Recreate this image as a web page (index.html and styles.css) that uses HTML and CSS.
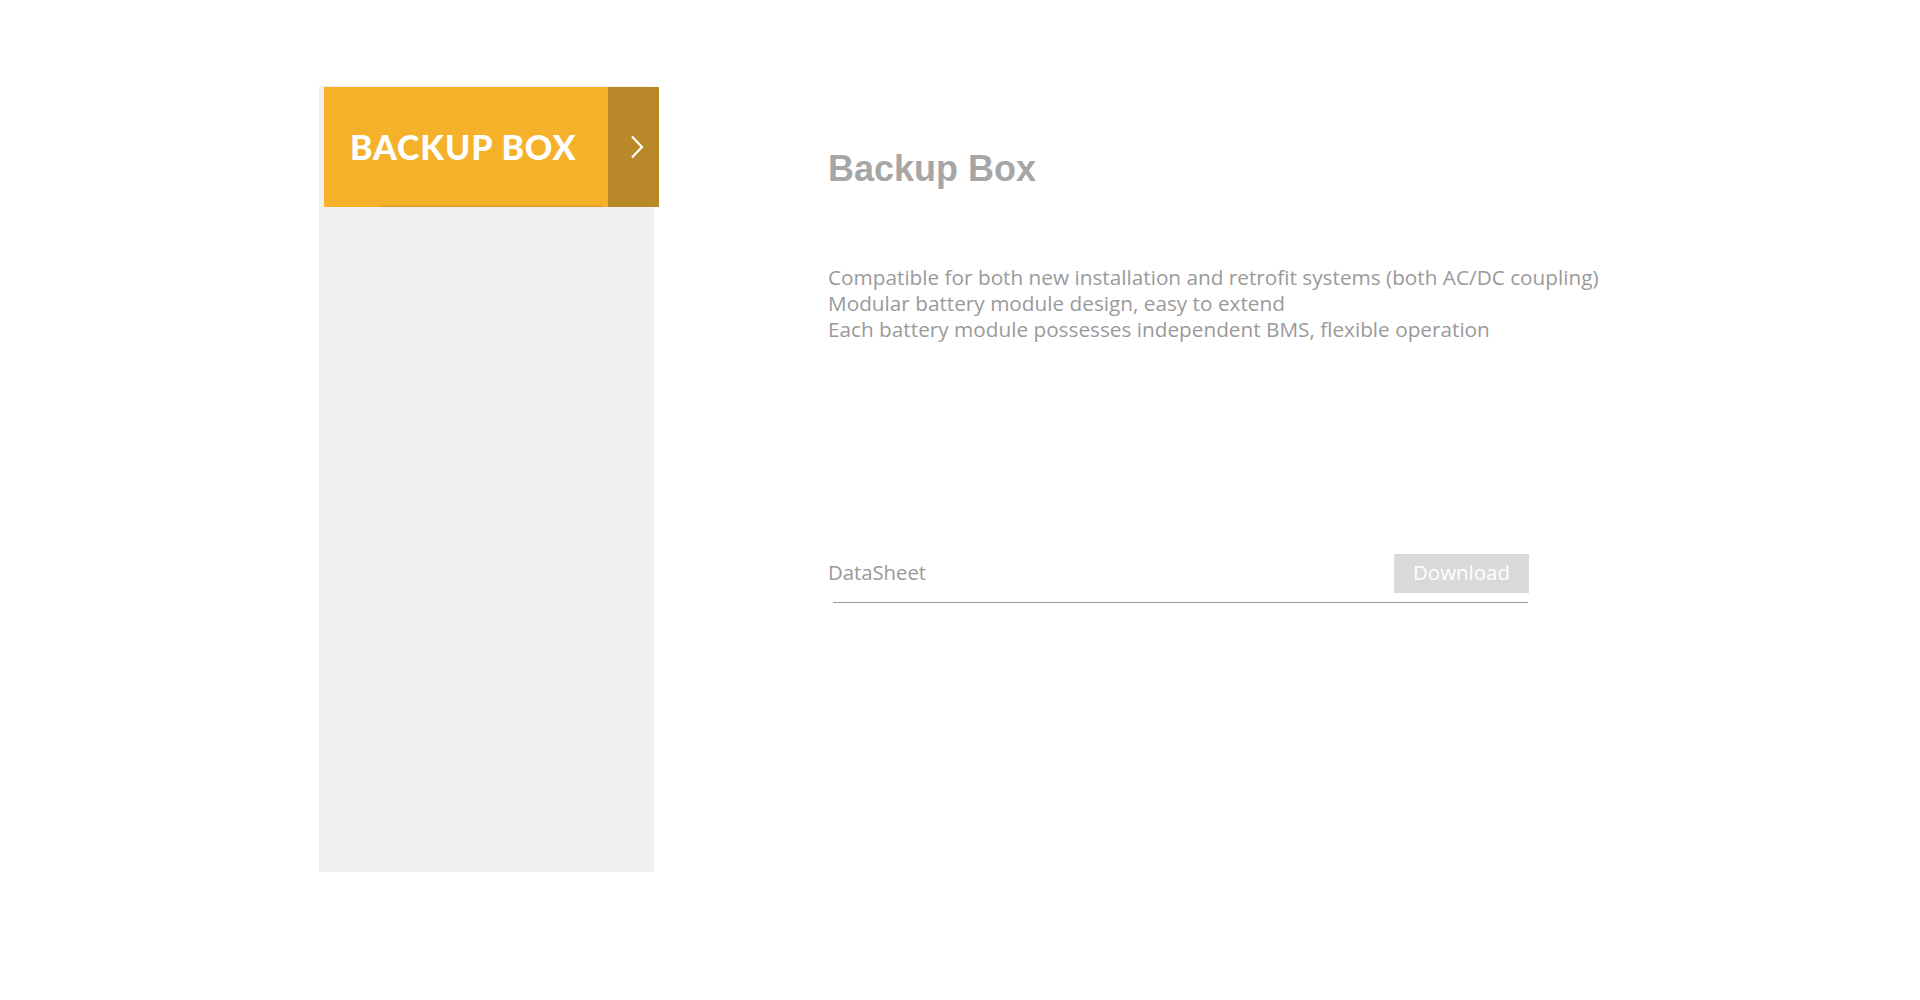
FILE: index.html
```html
<!DOCTYPE html>
<html lang="en">
<head>
<meta charset="utf-8">
<title>Backup Box</title>
<link rel="stylesheet" href="styles.css">
</head>
<body>
<div class="page">
  <aside class="side">
    <div class="tab">
      <span class="tab-label">BACKUP BOX</span>
      <span class="tab-arrow">
        <svg width="14" height="24" viewBox="0 0 14 24"><path d="M2 1.5 L12 12 L2 22.5" fill="none" stroke="#fff" stroke-width="2.2"/></svg>
      </span>
    </div>
  </aside>
  <main class="detail">
    <h1 class="title">Backup Box</h1>
    <ul class="features">
      <li>Compatible for both new installation and retrofit systems (both AC/DC coupling)</li>
      <li>Modular battery module design, easy to extend</li>
      <li>Each battery module possesses independent BMS, flexible operation</li>
    </ul>
    <div class="datasheet">
      <span class="datasheet-label">DataSheet</span>
      <a class="download" href="#">Download</a>
    </div>
    <div class="datasheet-rule"></div>
  </main>
</div>
</body>
</html>
```
FILE: styles.css
```css
html, body {
  margin: 0;
  padding: 0;
  background: #fff;
}
.page {
  display: flex;
  align-items: flex-start;
  padding: 86px 0 0 319px;
}
.side {
  width: 335px;
  height: 786px;
  background: #f0f0f0;
  padding-top: 1px;
  box-sizing: border-box;
  flex-shrink: 0;
}
.tab {
  display: flex;
  width: 335px;
  height: 120px;
  margin-left: 5px;
  position: relative;
}
.tab::after {
  content: "";
  position: absolute;
  left: 56px;
  width: 222px;
  bottom: 1px;
  height: 1px;
  background: #e3a52d;
  box-shadow: 0 1px 1px rgba(0,0,0,0.12);
}
.tab-label {
  width: 284px;
  background: #f6b12a;
  color: #fff;
  display: flex;
  align-items: center;
  padding-left: 26px;
  padding-bottom: 2px;
  box-sizing: border-box;
  font-family: "Lato", "DejaVu Sans", sans-serif;
  font-weight: 900;
  font-size: 34px;
  letter-spacing: 0.9px;
}
.tab-arrow {
  width: 51px;
  background: #b98929;
  display: flex;
  align-items: center;
  justify-content: center;
  padding-left: 6px;
  box-sizing: border-box;
}
.detail {
  margin-left: 174px;
  width: 772px;
}
.title {
  margin: 65px 0 0;
  font-family: "Liberation Sans", Arial, sans-serif;
  font-weight: bold;
  font-size: 36px;
  line-height: 36px;
  color: #a6a6a6;
}
.features {
  list-style: none;
  margin: 77px 0 0;
  padding: 0;
  font-family: "Open Sans", sans-serif;
  font-size: 20.75px;
  line-height: 26px;
  color: #9a9a9a;
}
.datasheet {
  display: flex;
  align-items: center;
  justify-content: space-between;
  width: 701px;
  margin-top: 212px;
  font-family: "Open Sans", sans-serif;
}
.datasheet-label {
  font-size: 20.3px;
  color: #999;
  margin-bottom: 3px;
}
.download {
  width: 135px;
  height: 39px;
  padding-bottom: 3px;
  box-sizing: border-box;
  background: #d9d9d9;
  color: #fff;
  text-decoration: none;
  font-size: 20.5px;
  display: flex;
  align-items: center;
  justify-content: center;
}
.datasheet-rule {
  margin: 9px 0 0 5px;
  width: 695px;
  height: 1px;
  background: #9c9c9c;
}
```
